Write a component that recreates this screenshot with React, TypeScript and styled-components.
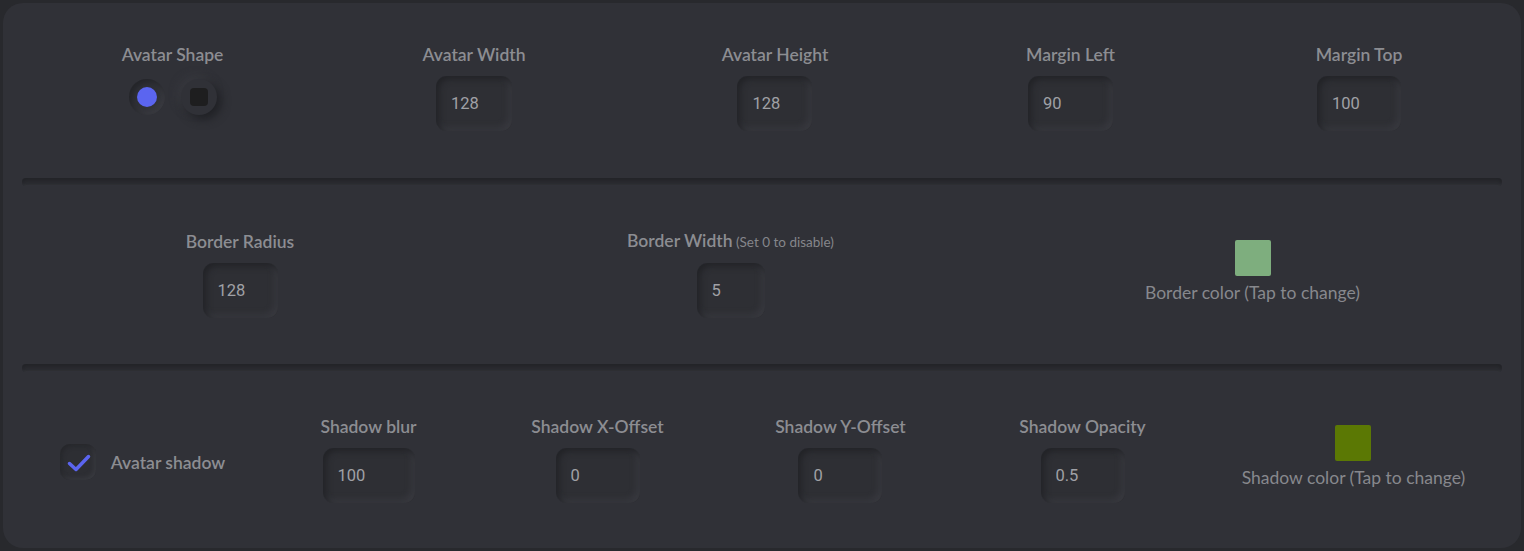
import React from "react";
import styled, { createGlobalStyle } from "styled-components";

const GlobalStyle = createGlobalStyle`
  html, body { margin: 0; padding: 0; background: #28292d; }
  body { font-family: "Lato", "Liberation Sans", sans-serif; }
  * { box-sizing: border-box; }
`;

const Card = styled.div`
  margin: 3px;
  height: 545px;
  background: #303137;
  border-radius: 20px;
  padding: 40px 19px 45px 19px;
  display: flex;
  flex-direction: column;
`;

const Row = styled.div<{ $cols: string; $align?: string }>`
  display: grid;
  grid-template-columns: ${(p) => p.$cols};
  align-items: ${(p) => p.$align || "center"};
  height: 88px;
`;

const Divider = styled.div`
  height: 8px;
  margin: 47px 0 43px;
  border-radius: 4px;
  background: #2c2d32;
  box-shadow: inset 0 3px 4px #222327, inset 0 -1px 2px #36373d;
`;

const Field = styled.div`
  display: flex;
  flex-direction: column;
  align-items: center;
  justify-self: center;
`;

const ColorBox = styled(Field)`
  margin-bottom: 3px;
`;

const Label = styled.div`
  font-family: "Lato", "Liberation Sans", sans-serif;
  font-weight: 600;
  font-size: 17.5px;
  line-height: 24px;
  color: #8c8d92;
  white-space: nowrap;
`;

const Hint = styled.span`
  font-weight: 400;
  font-size: 13.5px;
  color: #85868b;
`;

const NumberInput = styled.input<{ $w: number }>`
  margin-top: 9px;
  width: ${(p) => p.$w}px;
  height: 55px;
  border: none;
  outline: none;
  border-radius: 11px;
  padding: 0 0 0 15px;
  background: #2e2f34;
  color: #a0a1a6;
  font-family: "Roboto", "Liberation Sans", sans-serif;
  font-size: 16.5px;
  box-shadow: inset 3px 3px 6px #222327, inset -3px -3px 6px #3a3b41;
`;

const RadioGroup = styled.div`
  display: flex;
  gap: 16px;
  margin-top: 12px;
`;

const RadioButton = styled.div<{ $active?: boolean }>`
  width: 36px;
  height: 36px;
  border-radius: 50%;
  display: flex;
  align-items: center;
  justify-content: center;
  background: #303137;
  box-shadow: ${(p) =>
    p.$active
      ? "inset 3px 3px 6px #232428, inset -3px -3px 6px #3b3c42"
      : "4px 4px 10px #1f2024, -3px -3px 8px #393a40"};
`;

const Dot = styled.div`
  width: 20px;
  height: 20px;
  border-radius: 50%;
  background: #5b65f0;
`;

const SquareMark = styled.div`
  width: 18px;
  height: 18px;
  border-radius: 4px;
  background: #1e1e1f;
`;

const Swatch = styled.div<{ $color: string }>`
  width: 36px;
  height: 36px;
  border-radius: 2px;
  background: ${(p) => p.$color};
`;

const SwatchText = styled.div`
  margin-top: 5px;
  font-family: "Lato", "Liberation Sans", sans-serif;
  font-size: 17.5px;
  line-height: 24px;
  color: #87888d;
  white-space: nowrap;
`;

const CheckRow = styled.label`
  display: flex;
  align-items: center;
  gap: 15px;
  justify-self: center;
  margin-top: 6px;
`;

const CheckBox = styled.div`
  width: 36px;
  height: 36px;
  border-radius: 10px;
  background: #2d2e33;
  box-shadow: inset 2px 2px 4px #26272b, inset -2px -2px 4px #3a3b41;
  display: flex;
  align-items: center;
  justify-content: center;
`;

const CheckLabel = styled.span`
  font-family: "Lato", "Liberation Sans", sans-serif;
  font-weight: 600;
  font-size: 17.5px;
  color: #8c8d92;
`;

const InputField = ({ label, value, w, hint }: { label: string; value: string; w: number; hint?: string }) => (
  <Field>
    <Label>
      {label}
      {hint && <Hint> {hint}</Hint>}
    </Label>
    <NumberInput $w={w} defaultValue={value} />
  </Field>
);

const ColorField = ({ color, text }: { color: string; text: string }) => (
  <ColorBox>
    <Swatch $color={color} />
    <SwatchText>{text}</SwatchText>
  </ColorBox>
);

export default function App() {
  return (
    <>
      <GlobalStyle />
      <Card>
        <Row $cols="301px 302px 300px 291px 1fr" $align="start">
          <Field>
            <Label>Avatar Shape</Label>
            <RadioGroup>
              <RadioButton $active>
                <Dot />
              </RadioButton>
              <RadioButton>
                <SquareMark />
              </RadioButton>
            </RadioGroup>
          </Field>
          <InputField label="Avatar Width" value="128" w={76} />
          <InputField label="Avatar Height" value="128" w={75} />
          <InputField label="Margin Left" value="90" w={85} />
          <InputField label="Margin Top" value="100" w={84} />
        </Row>
        <Divider />
        <Row $cols="436px 545px 1fr">
          <InputField label="Border Radius" value="128" w={75} />
          <InputField label="Border Width" hint="(Set 0 to disable)" value="5" w={68} />
          <ColorField color="#7eae7e" text="Border color (Tap to change)" />
        </Row>
        <Divider />
        <Row $cols="241px 211px 247px 239px 245px 1fr">
          <CheckRow>
            <CheckBox>
              <svg width="36" height="36" viewBox="0 0 36 36">
                <polyline
                  points="9.5,19.5 16,25.5 28.5,12.5"
                  fill="none"
                  stroke="#5b65f0"
                  strokeWidth="3.5"
                  strokeLinecap="round"
                  strokeLinejoin="round"
                />
              </svg>
            </CheckBox>
            <CheckLabel>Avatar shadow</CheckLabel>
          </CheckRow>
          <InputField label="Shadow blur" value="100" w={92} />
          <InputField label="Shadow X-Offset" value="0" w={84} />
          <InputField label="Shadow Y-Offset" value="0" w={84} />
          <InputField label="Shadow Opacity" value="0.5" w={84} />
          <ColorField color="#5b7804" text="Shadow color (Tap to change)" />
        </Row>
      </Card>
    </>
  );
}
